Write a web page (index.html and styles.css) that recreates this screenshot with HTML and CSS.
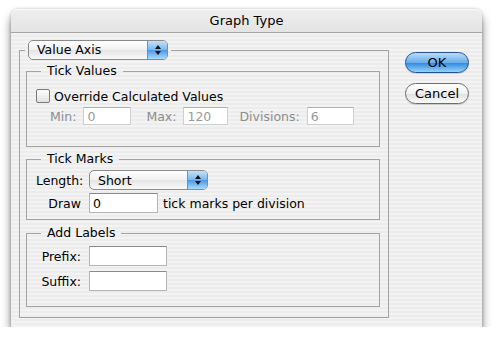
FILE: index.html
```html
<!DOCTYPE html>
<html lang="en">
<head>
  <meta charset="UTF-8" />
  <title>Graph Type</title>
  <link rel="stylesheet" href="styles.css">
</head>
<body>
  <div class="window">
    <div class="titlebar">Graph Type</div>
    <div class="content">
      <fieldset class="group outer">
        <legend>
          <div class="popup axis">
            <span class="popup-label">Value Axis</span>
            <span class="popup-arrows">
              <svg width="8" height="12" viewBox="0 0 8 12"><path d="M4 1 L7 5 H1 Z M4 11 L7 7 H1 Z" fill="#111"/></svg>
            </span>
          </div>
        </legend>

        <fieldset class="group values">
          <legend>Tick Values</legend>
          <div class="check-row"><span class="checkbox"></span>Override Calculated Values</div>
          <div class="range-row">
            <span class="dim">Min:</span><input class="field f-min" value="0" disabled>
            <span class="dim gap-l">Max:</span><input class="field f-max" value="120" disabled>
            <span class="dim gap-s">Divisions:</span><input class="field f-div" value="6" disabled>
          </div>
        </fieldset>

        <fieldset class="group ticks">
          <legend>Tick Marks</legend>
          <div class="form-grid marks">
            <span class="lbl">Length:</span>
            <div class="popup short">
              <span class="popup-label">Short</span>
              <span class="popup-arrows">
                <svg width="8" height="12" viewBox="0 0 8 12"><path d="M4 1 L7 5 H1 Z M4 11 L7 7 H1 Z" fill="#111"/></svg>
              </span>
            </div>
            <span class="lbl">Draw</span>
            <div class="inline"><input class="field f-draw" value="0"><span>tick marks per division</span></div>
          </div>
        </fieldset>

        <fieldset class="group affixes">
          <legend>Add Labels</legend>
          <div class="form-grid labels">
            <span class="lbl">Prefix:</span><input class="field f-label" value="">
            <span class="lbl">Suffix:</span><input class="field f-label" value="">
          </div>
        </fieldset>
      </fieldset>

      <div class="buttons">
        <button class="aqua default">OK</button>
        <button class="aqua">Cancel</button>
      </div>
    </div>
  </div>
</body>
</html>
```

FILE: styles.css
```css
body {
  margin: 0;
  background: #fff;
  font-family: "DejaVu Sans", sans-serif;
  font-size: 12.5px;
  color: #000;
}

.window {
  width: 471px;
  height: 318px;
  margin: 9px 0 0 11px;
  border-radius: 7px 7px 0 0;
  background: repeating-linear-gradient(#f3f3f3 0 2px, #ececec 2px 4px);
  box-shadow: 0 7px 10px rgba(0, 0, 0, 0.5), 0 0 3px rgba(0, 0, 0, 0.25);
}

.titlebar {
  height: 22px;
  line-height: 22px;
  text-align: center;
  font-size: 13px;
  border-radius: 7px 7px 0 0;
  border-top: 1px solid #fafafa;
  border-bottom: 1px solid #a5a5a5;
  background: linear-gradient(#eeeeee, #e4e4e4);
}

.content {
  display: flex;
  align-items: flex-start;
  padding: 7px 0 0 8px;
}

/* group boxes */
.group {
  box-sizing: border-box;
  margin: 0;
  padding: 0 0 0 9px;
  border: 1px solid #a3a3a3;
}

.group legend {
  margin-left: 5px;
  padding: 0 6px;
  line-height: 16px;
}

.outer {
  width: 370px;
  height: 278px;
  padding: 3px 8px 0 6px;
}

.outer > legend {
  margin-left: -1px;
  padding: 0 3px;
}

.values { height: 84px; }
.ticks { height: 69px; margin-top: 4px; }
.affixes { height: 82px; margin-top: 5px; }

.check-row {
  display: flex;
  align-items: center;
  gap: 4px;
  height: 14px;
  margin-top: 10px;
}

.checkbox {
  width: 12px;
  height: 12px;
  border: 1px solid #7a7a7a;
  border-radius: 2px;
  background: linear-gradient(#fdfdfd, #e2e2e2);
}

.range-row {
  display: flex;
  align-items: center;
  margin: 4px 0 0 14px;
}

.dim {
  color: #8c8c8c;
  margin-right: 7px;
}

.gap-l {
  margin-left: 15px;
}

.gap-s {
  margin-left: 11px;
}

.field {
  box-sizing: border-box;
  height: 20px;
  padding: 0 3px;
  font: inherit;
  color: #000;
  background: #fff;
  border: 1px solid #b5b5b5;
  border-top-color: #8a8a8a;
}

.field:disabled {
  height: 18px;
  color: #9a9a9a;
  border-color: #cfcfcf;
  border-top-color: #b0b0b0;
}

.f-min { width: 48px; }
.f-max { width: 45px; }
.f-div { width: 47px; }
.f-draw { width: 69px; }
.f-label { width: 78px; }

.form-grid {
  display: grid;
  grid-template-columns: 45px auto;
  column-gap: 8px;
  align-items: center;
}

.form-grid .lbl {
  text-align: right;
}

.marks {
  row-gap: 3px;
  margin-top: 3px;
}

.labels {
  row-gap: 5px;
  margin-top: 5px;
}

.inline {
  display: flex;
  align-items: center;
  gap: 5px;
}

/* popup buttons */
.popup {
  display: flex;
  align-items: center;
  box-sizing: border-box;
  height: 20px;
  border: 1px solid #8a8a8a;
  border-radius: 5px;
  background: linear-gradient(#ffffff, #f0f0f0 50%, #e4e4e4 51%, #fafafa);
  overflow: hidden;
}

.axis { width: 140px; }
.short { width: 119px; }

.popup-label {
  flex: 1;
  padding-left: 8px;
}

.popup-arrows {
  display: flex;
  align-items: center;
  justify-content: center;
  width: 19px;
  height: 100%;
  border-left: 1px solid #6f8fb5;
  background: linear-gradient(#c3e1fa, #79b7ee 50%, #4b97e5 51%, #a9dbfd);
}

/* push buttons */
.buttons {
  display: flex;
  flex-direction: column;
  gap: 10px;
  margin: 12px 0 0 16px;
}

.aqua {
  width: 64px;
  height: 21px;
  padding: 0;
  font-family: inherit;
  font-size: 13px;
  border: 1px solid #6d6d6d;
  border-radius: 11px;
  background: linear-gradient(#ffffff, #f1f1f1 50%, #e0e0e0 51%, #fbfbfb);
  box-shadow: 0 1px 1px rgba(0, 0, 0, 0.15);
}

.aqua.default {
  border-color: #24508f;
  background: linear-gradient(#b9dcf8, #6aaeec 50%, #2f86de 51%, #93d4fc);
}
```
